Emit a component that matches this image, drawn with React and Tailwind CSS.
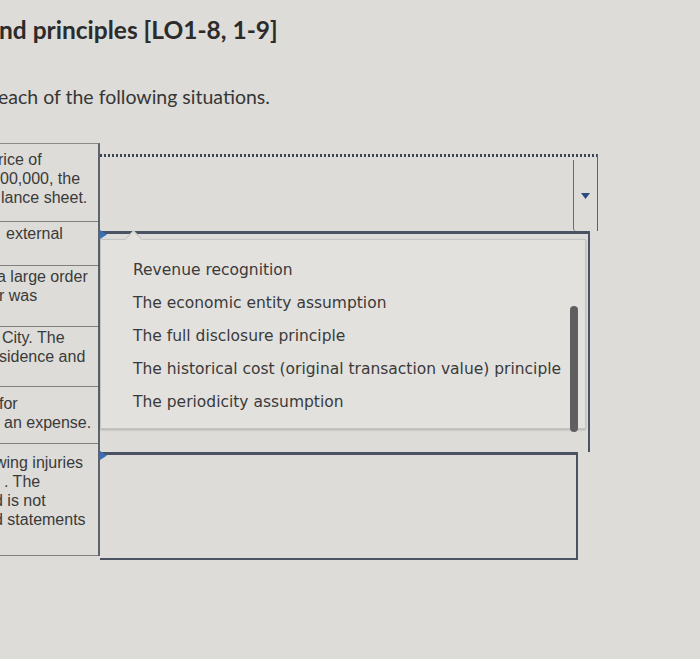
import React from "react"

const rows = [
	{ h: "h-[78px]", pt: "pt-[6px]", lines: [["-ml-[2px]", "rice of"], ["pl-0", "00,000, the"], ["pl-[1px]", "lance sheet."]] },
	{ h: "h-[44px]", pt: "pt-[2px]", lines: [["pl-[6px]", "external"]] },
	{ h: "h-[61px]", pt: "pt-[1px]", lines: [["-ml-[3px]", "a large order"], ["-ml-[1px]", "r was"]] },
	{ h: "h-[60px]", pt: "pt-[1px]", lines: [["pl-[2px]", "City. The"], ["-ml-[1px]", "sidence and"]] },
	{ h: "h-[57px]", pt: "pt-[7px]", lines: [["-ml-[1px]", "for"], ["pl-[4px]", "an expense."]] },
	{ h: "h-[112px]", pt: "pt-[9px]", lines: [["-ml-[5px]", "wing injuries"], ["pl-[4px]", ". The"], ["-ml-[6px]", "d is not"], ["-ml-[6px]", "d statements"]] },
]

const options = [
	"Revenue recognition",
	"The economic entity assumption",
	"The full disclosure principle",
	"The historical cost (original transaction value) principle",
	"The periodicity assumption",
]

function Flag() {
	return (
		<svg className="absolute -top-[4px] left-0" width="7" height="9" viewBox="0 0 7 9">
			<path d="M0 0 L7 4.5 L0 9 Z" fill="#3a6fb3" />
		</svg>
	)
}

export default function App() {
	return (
		<div className="w-[700px] h-[659px] overflow-hidden bg-[#dddcd8] text-[#333]">
			<h1 className="mt-[16px] -ml-[1px] text-[24.5px] leading-[28px] font-bold text-[#2b2b2b] font-['Lato',sans-serif]">
				nd principles [LO1-8, 1-9]
			</h1>
			<p className="mt-[40px] -ml-[2px] text-[19.5px] leading-[26px] text-[#363636] font-['Lato',sans-serif]">
				each of the following situations.
			</p>

			<div className="mt-[33px] flex items-start">
				{/* left column, situations */}
				<div className="w-[100px] shrink-0 border-t border-[#8a8a8a] border-r-2 border-r-[#5d626c] overflow-hidden font-['Liberation_Sans',Arial,sans-serif] text-[16px] leading-[19px] text-[#3a3a3a]">
					{rows.map((r, i) => (
						<div key={i} className={`${r.h} ${r.pt} border-b border-[#7f7f7f] whitespace-nowrap`}>
							{r.lines.map(([off, t], j) => (
								<div key={j} className={off}>{t}</div>
							))}
						</div>
					))}
				</div>

				{/* right column, selects */}
				<div className="flex flex-col pt-[11px]">
					{/* select 1 */}
					<div className="w-[498px] h-[77px] flex flex-col border-r border-[#5d626c]">
						<div className="h-[3px] bg-[repeating-linear-gradient(90deg,#3d4454_0_2px,transparent_2px_4px)]" />
						<div className="flex-1 flex justify-end">
							<div className="w-[24px] mt-[3px] border-l border-[#666b75] rounded-bl-[3px] flex items-center justify-center">
								<svg width="9" height="6" viewBox="0 0 9 6">
									<path d="M0 0 H9 L4.5 6 Z" fill="#2c4a7e" />
								</svg>
							</div>
						</div>
					</div>

					{/* select 2, open */}
					<div className="relative w-[490px] h-[221px] border-t-[3px] border-[#4a5263] border-r-2">
						<Flag />
						<div className="relative mt-[5px] w-[486px] h-[190px] bg-[#e2e1de] border border-[#c3c3c1] shadow-[0_1px_2px_rgba(0,0,0,0.2)] font-['DejaVu_Sans',Verdana,sans-serif] text-[15.5px] text-[#3a3a3a]">
							<div className="absolute -top-[7px] left-[26px] w-[13px] h-[13px] rotate-45 bg-[#e2e1de] border-l border-t border-[#c3c3c1]" />
							<ul className="relative pt-[14px] pl-[32px]">
								{options.map((o) => (
									<li key={o} className="h-[33px] leading-[33px] whitespace-nowrap">{o}</li>
								))}
							</ul>
							<div className="absolute right-[7px] top-[66px] -bottom-[4px] w-[8px] rounded-full bg-[#5f5f5f]" />
						</div>
					</div>

					{/* select 3 */}
					<div className="relative w-[478px] h-[108px] border-t-[3px] border-r-2 border-b-2 border-[#4a5263]">
						<Flag />
					</div>
				</div>
			</div>
		</div>
	)
}
